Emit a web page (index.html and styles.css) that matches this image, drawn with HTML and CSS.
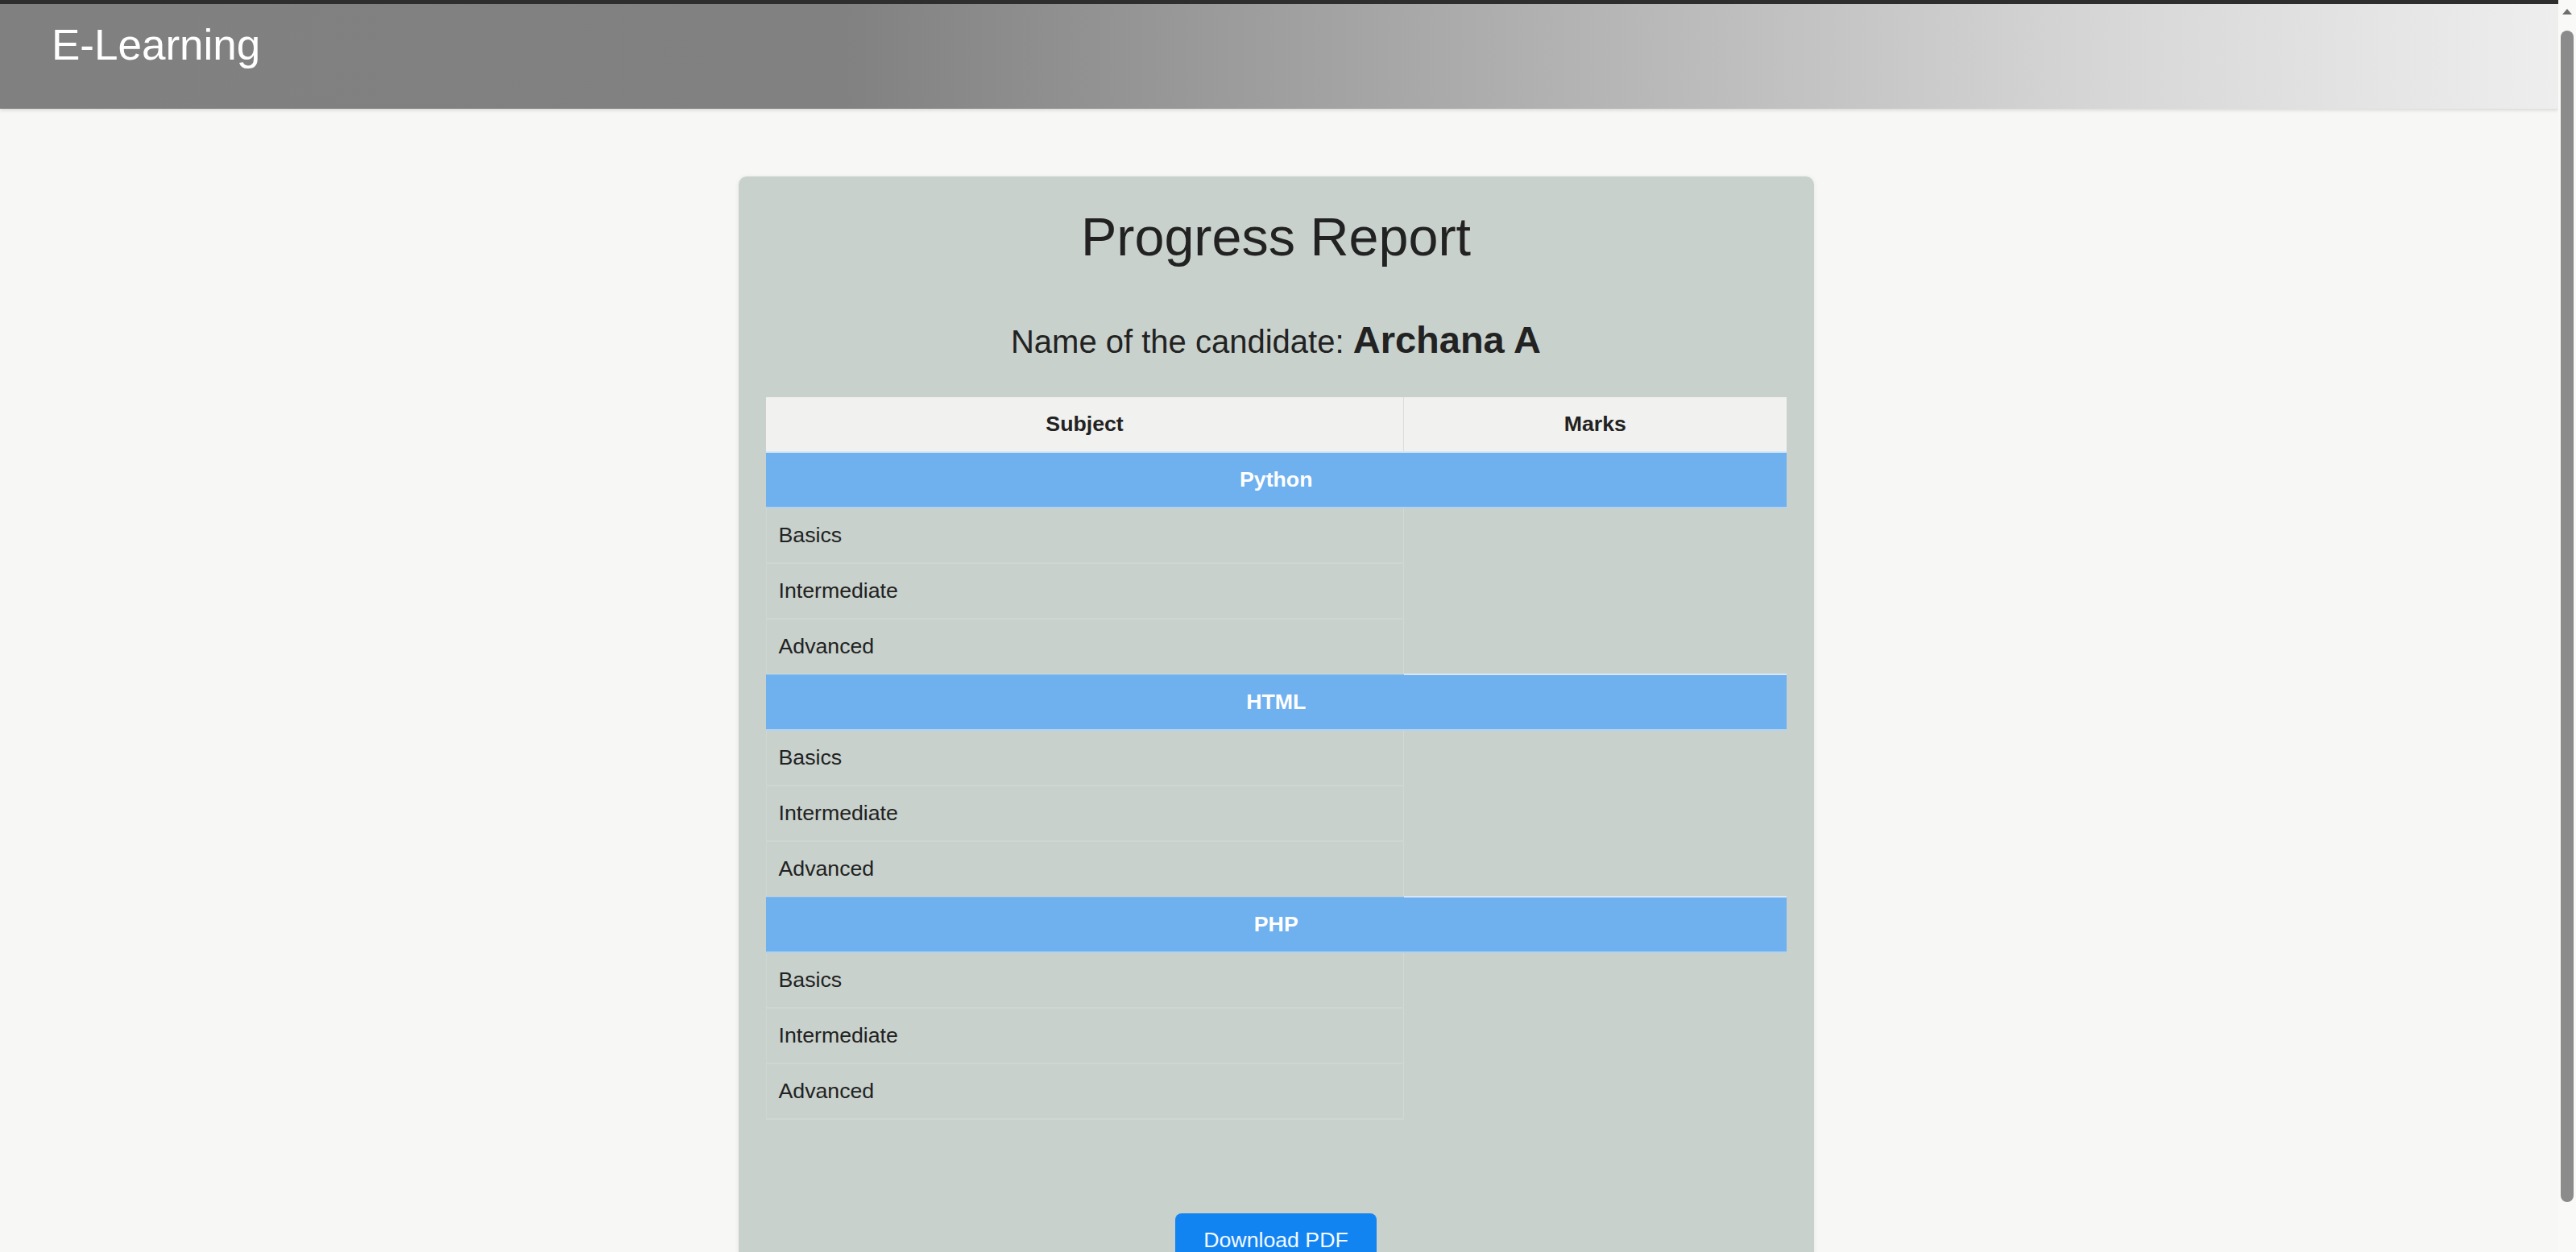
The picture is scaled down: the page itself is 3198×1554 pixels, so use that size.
FILE: index.html
```html
<!DOCTYPE html>
<html lang="en">
<head>
  <meta charset="UTF-8" />
  <meta name="viewport" content="width=device-width, initial-scale=1.0"/>
  <title>Progress Report</title>
  <link rel="stylesheet" href="styles.css">
</head>
<body>
  <header class="topbar">
    <span class="brand">E-Learning</span>
  </header>

  <div class="page">
    <main class="report-card">
      <h1>Progress Report</h1>
      <p class="candidate">Name of the candidate: <strong>Archana A</strong></p>

      <table class="report">
        <thead>
          <tr>
            <th class="col-subject">Subject</th>
            <th class="col-marks">Marks</th>
          </tr>
        </thead>
        <tbody>
          <tr class="course"><td colspan="2">Python</td></tr>
          <tr><td class="level">Basics</td><td class="marks" rowspan="3"></td></tr>
          <tr><td class="level">Intermediate</td></tr>
          <tr><td class="level">Advanced</td></tr>

          <tr class="course"><td colspan="2">HTML</td></tr>
          <tr><td class="level">Basics</td><td class="marks" rowspan="3"></td></tr>
          <tr><td class="level">Intermediate</td></tr>
          <tr><td class="level">Advanced</td></tr>

          <tr class="course"><td colspan="2">PHP</td></tr>
          <tr><td class="level">Basics</td><td class="marks" rowspan="3"></td></tr>
          <tr><td class="level">Intermediate</td></tr>
          <tr><td class="level">Advanced</td></tr>
        </tbody>
      </table>

      <div class="actions">
        <button type="button" class="btn">Download PDF</button>
      </div>
    </main>
  </div>

  <!-- window scrollbar, kept visible -->
  <div class="scrollbar" aria-hidden="true">
    <span class="scroll-arrow"></span>
    <span class="scroll-thumb"></span>
  </div>
</body>
</html>
```

FILE: styles.css
```css
body {
  font-family: 'Liberation Sans', Arial, sans-serif;
  background-color: #f7f7f5;
  color: #222;
  margin: 0;
  padding-right: 22px;
  border-top: 5px solid #2e2e2e;
}

.topbar {
  height: 130px;
  box-sizing: border-box;
  padding: 20px 64px 0;
  background: linear-gradient(to right, #808080 0%, #818181 33%, #b4b4b4 62%, #d6d6d6 82%, #eeeeee 100%);
  box-shadow: 0 2px 4px rgba(0,0,0,0.12);
}

.brand {
  font-size: 53px;
  color: #ffffff;
}

.page {
  padding-right: 8px;
}

.report-card {
  width: 1335px;
  box-sizing: border-box;
  margin: 84px auto 0;
  padding: 37px 34px 34px;
  background: #c8d1cc;
  border-radius: 10px;
  box-shadow: 0 1px 6px rgba(0,0,0,0.08);
  text-align: center;
}

h1 {
  font-size: 66.5px;
  font-weight: normal;
  margin: 0 0 62px;
  color: #222;
}

.candidate {
  font-size: 40px;
  margin: 0 0 44px;
}

.candidate strong {
  font-size: 47px;
}

.report {
  width: 100%;
  border-collapse: collapse;
  font-size: 26.7px;
  text-align: left;
}

.report th,
.report td {
  padding: 18px 15px;
  line-height: 31px;
}

.report th {
  background: #f1f1ef;
  text-align: center;
  font-weight: bold;
}

.report .col-subject {
  width: 62.5%;
  border-right: 1px solid #dcdcda;
}

.report .course td {
  background: #6fb0ef;
  color: #fff;
  font-weight: bold;
  text-align: center;
  border-top: 2px solid #d6e7f8;
  border-bottom: 2px solid #b3d2f0;
}

.report .level {
  border-bottom: 2px solid rgba(255,255,255,0.14);
  border-left: 1px solid rgba(255,255,255,0.12);
}

.report .marks {
  border-left: 1px solid rgba(255,255,255,0.2);
}

.actions {
  margin-top: 116px;
}

.btn {
  padding: 18px 35px;
  font-family: inherit;
  font-size: 26.7px;
  line-height: 31px;
  background-color: #1284f2;
  color: #f4f9ff;
  border: none;
  border-radius: 8px;
  cursor: pointer;
}

.btn:hover {
  background-color: #0b76dd;
}

.scrollbar {
  position: fixed;
  top: 0;
  right: 0;
  bottom: 0;
  width: 22px;
  background: #f9f9f8;
}

.scroll-arrow {
  position: absolute;
  top: 11px;
  left: 5px;
  border-left: 6px solid transparent;
  border-right: 6px solid transparent;
  border-bottom: 7px solid #6e6e6e;
}

.scroll-thumb {
  position: absolute;
  top: 38px;
  bottom: 62px;
  left: 3px;
  width: 16px;
  border-radius: 8px;
  background: #8b8b8b;
}
```
